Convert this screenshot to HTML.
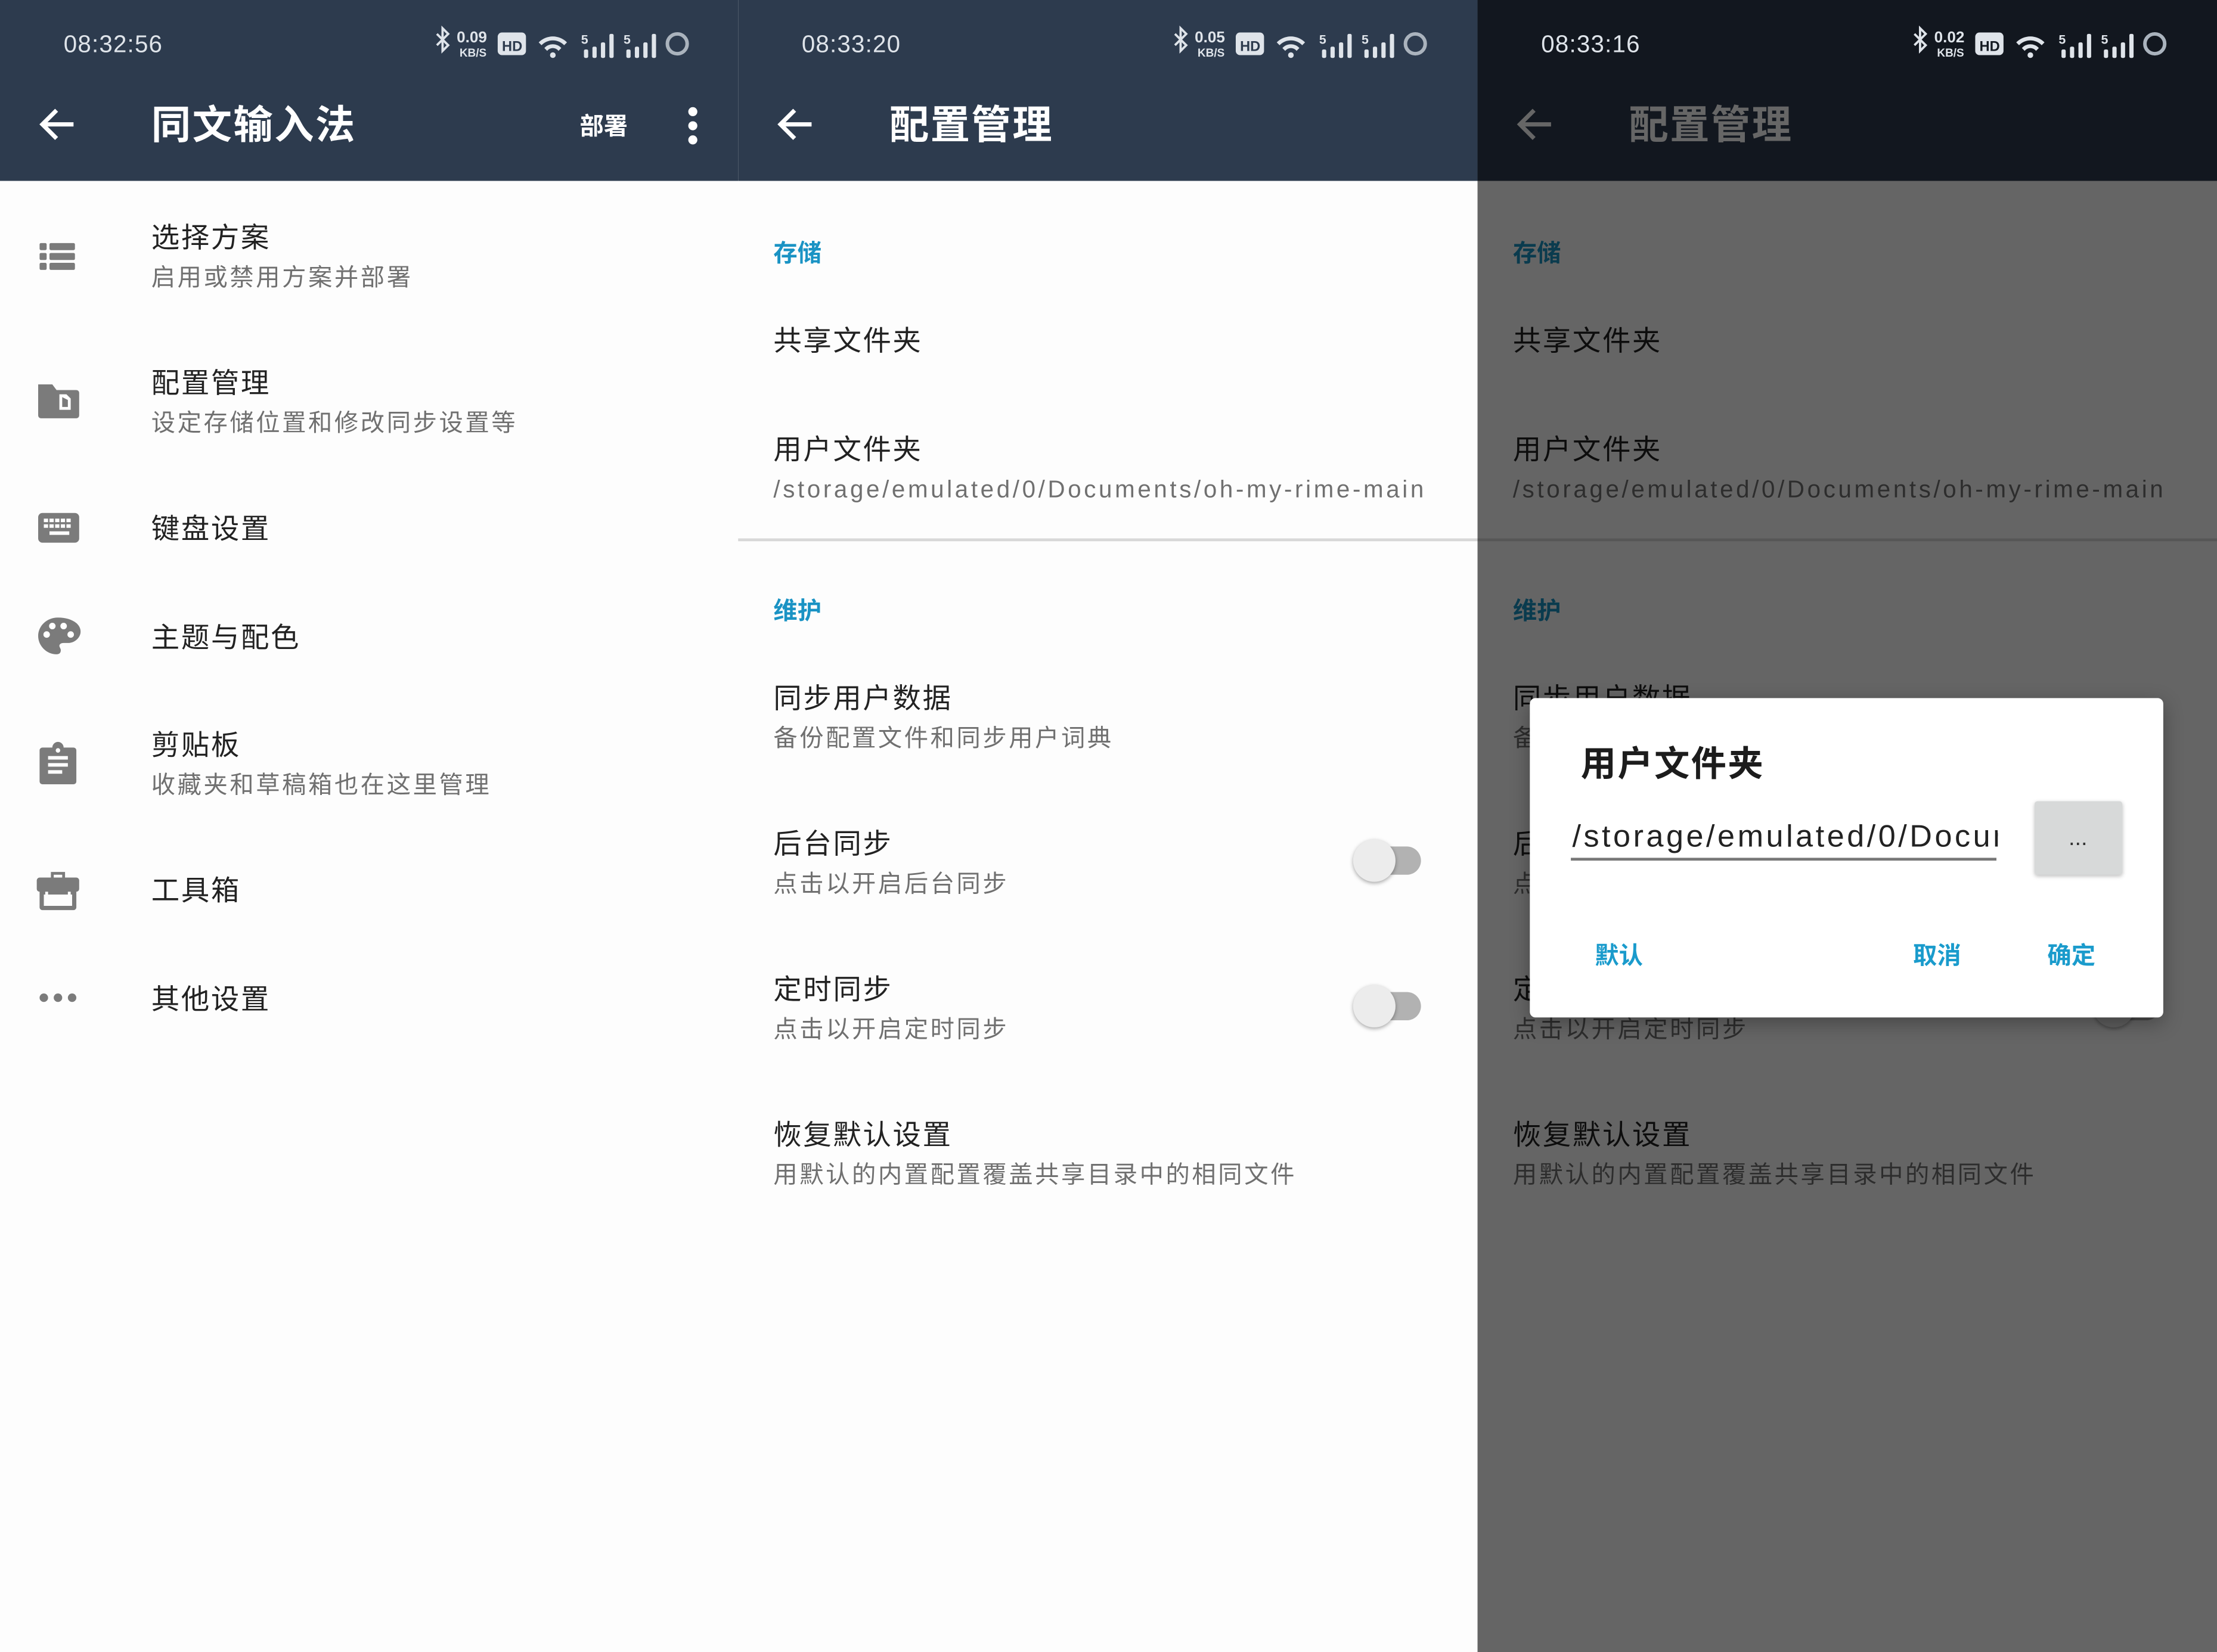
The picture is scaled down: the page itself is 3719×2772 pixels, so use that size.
<!DOCTYPE html>
<html><head><meta charset="utf-8">
<style>
html,body{margin:0;padding:0;width:3719px;height:2772px;overflow:hidden;background:#fff}
#s{position:absolute;left:0;top:0;width:1568px;height:1169px;transform:scale(2.37181,2.37126);transform-origin:0 0;font-family:"Liberation Sans","Noto Sans CJK SC",sans-serif;overflow:hidden;background:#fdfdfd}
.p{position:absolute;top:0;height:1169px;overflow:hidden;background:#fdfdfd}
.hd{position:absolute;left:0;top:0;width:100%;height:128px;background:#2d3b4e}
.t{position:absolute;white-space:nowrap;line-height:1;margin-top:2px}
.time{color:#dfe4ea;font-size:17px;letter-spacing:0.5px;top:21px}
.ttl{color:#fff;font-size:28px;font-weight:bold;top:73px;letter-spacing:1px}
.h{color:#222;font-size:20px;letter-spacing:1.1px}
.sub{color:#707070;font-size:17px;letter-spacing:1.5px}
.sec{color:#1a93c4;font-size:17px;font-weight:bold}
.path{color:#707070;font-size:17px;letter-spacing:1.95px}
.tg{position:absolute;width:48px;height:40px}
.tg .tr{position:absolute;left:12px;top:10px;width:36px;height:20px;border-radius:10px;background:#b2b2b2}
.tg .th{position:absolute;left:0;top:5px;width:30px;height:30px;border-radius:50%;background:#ececec;box-shadow:0 1px 3px rgba(0,0,0,.35)}
</style></head><body><div id="s">

<!-- Panel 1 -->
<div class="p" style="left:0;width:522px">
 <div class="hd"></div>
 <div class="t time" style="left:45px">08:32:56</div>
 <svg style="position:absolute;left:305px;top:18px" width="185" height="26" viewBox="0 0 185 26" fill="#dfe4ea">
  <path d="M4 6l8 8-4 4V2l4 4-8 8" stroke="#dfe4ea" stroke-width="1.6" fill="none"/>
  <text x="18" y="12" font-size="11" font-family="Liberation Sans" font-weight="bold" fill="#dfe4ea">0.09</text>
  <text x="20" y="22" font-size="8" font-family="Liberation Sans" font-weight="bold" fill="#dfe4ea">KB/S</text>
  <rect x="47" y="5" width="20" height="16" rx="3"/>
  <text x="50" y="18" font-size="10" font-weight="bold" fill="#2d3b4e" font-family="Liberation Sans">HD</text>
  <path d="M76 12a14 14 0 0 1 20 0l-2 2a11 11 0 0 0-16 0zM80 16a8 8 0 0 1 12 0l-2 2a5 5 0 0 0-8 0z"/><circle cx="86" cy="21" r="2"/>
  <text x="106" y="13" font-size="9" font-weight="bold" fill="#dfe4ea">5</text>
  <rect x="108" y="17" width="3" height="6" rx="1"/><rect x="114" y="15" width="3" height="8" rx="1"/><rect x="120" y="12" width="3" height="11" rx="1"/><rect x="126" y="6" width="3" height="17" rx="1"/>
  <text x="136" y="13" font-size="9" font-weight="bold" fill="#dfe4ea">5</text>
  <rect x="138" y="17" width="3" height="6" rx="1"/><rect x="144" y="15" width="3" height="8" rx="1"/><rect x="150" y="12" width="3" height="11" rx="1"/><rect x="156" y="6" width="3" height="17" rx="1"/>
  <circle cx="174" cy="13" r="7" fill="none" stroke="#aab3bd" stroke-width="2.5"/>
 </svg>
 <svg style="position:absolute;left:26px;top:75px" width="28" height="26" viewBox="0 0 28 26"><path d="M26 13H4M14 3L4 13l10 10" stroke="#fff" stroke-width="3" fill="none"/></svg>
 <div class="t ttl" style="left:107px">同文输入法</div>
 <div class="t" style="left:410px;top:79px;color:#fff;font-size:17px;font-weight:bold">部署</div>
 <svg style="position:absolute;left:484px;top:75px" width="12" height="28"><circle cx="6" cy="4" r="3.2" fill="#fff"/><circle cx="6" cy="14" r="3.2" fill="#fff"/><circle cx="6" cy="24" r="3.2" fill="#fff"/></svg>

 <svg style="position:absolute;left:0;top:128px" width="80" height="620" viewBox="0 128 80 620" fill="#7b7b7b">
  <rect x="28" y="172" width="5" height="5" rx="1"/><rect x="35" y="172" width="18" height="5" rx="1"/>
  <rect x="28" y="179" width="5" height="5" rx="1"/><rect x="35" y="179" width="18" height="5" rx="1"/>
  <rect x="28" y="186" width="5" height="5" rx="1"/><rect x="35" y="186" width="18" height="5" rx="1"/>
  <path d="M27 272h10l3 4h14a2 2 0 0 1 2 2v16a2 2 0 0 1-2 2H29a2 2 0 0 1-2-2z"/><path d="M42 279h5l3 3v8h-8z" fill="#fff"/><path d="M44 281v7h4v-5z" fill="#7b7b7b"/>
  <rect x="27" y="363" width="29" height="21" rx="3"/>
  <g fill="#fff"><rect x="31" y="367" width="3" height="2.5"/><rect x="35" y="367" width="3" height="2.5"/><rect x="39" y="367" width="3" height="2.5"/><rect x="43" y="367" width="3" height="2.5"/><rect x="47" y="367" width="3" height="2.5"/><rect x="31" y="371" width="3" height="2.5"/><rect x="35" y="371" width="3" height="2.5"/><rect x="39" y="371" width="3" height="2.5"/><rect x="43" y="371" width="3" height="2.5"/><rect x="47" y="371" width="3" height="2.5"/><rect x="35" y="376" width="14" height="2.5"/></g>
  <path d="M41 437c-8 0-14 6-14 13s6 13 13 13c2 0 3-1 3-3 0-1-1-2-1-3 0-1 1-2 3-2h3c5 0 9-4 9-8 0-6-7-10-16-10z"/>
  <g fill="#fff"><circle cx="33" cy="449" r="2.3"/><circle cx="37" cy="443" r="2.3"/><circle cx="45" cy="443" r="2.3"/><circle cx="50" cy="449" r="2.3"/></g>
  <path d="M30 529h7a4 4 0 0 1 8 0h7a2 2 0 0 1 2 2v22a2 2 0 0 1-2 2H30a2 2 0 0 1-2-2V531a2 2 0 0 1 2-2z"/><circle cx="41" cy="531" r="1.6" fill="#fff"/>
  <g fill="#fff"><rect x="34" y="535" width="14" height="2.5"/><rect x="34" y="540" width="14" height="2.5"/><rect x="34" y="545" width="10" height="2.5"/></g>
  <path d="M36 617h10v4h-2v-2h-6v2h-2z"/><rect x="26" y="621" width="30" height="10" rx="2"/><path d="M28 630h4v3h2v-3h14v3h2v-3h4v12a2 2 0 0 1-2 2H30a2 2 0 0 1-2-2zM31 633v8h20v-8z"/>
  <circle cx="31" cy="706" r="3"/><circle cx="41" cy="706" r="3"/><circle cx="51" cy="706" r="3"/>
 </svg>
 <div class="t h" style="left:107px;top:157px">选择方案</div>
 <div class="t sub" style="left:107px;top:186px">启用或禁用方案并部署</div>
 <div class="t h" style="left:107px;top:260px">配置管理</div>
 <div class="t sub" style="left:107px;top:289px">设定存储位置和修改同步设置等</div>
 <div class="t h" style="left:107px;top:363px">键盘设置</div>
 <div class="t h" style="left:107px;top:440px">主题与配色</div>
 <div class="t h" style="left:107px;top:516px">剪贴板</div>
 <div class="t sub" style="left:107px;top:545px">收藏夹和草稿箱也在这里管理</div>
 <div class="t h" style="left:107px;top:619px">工具箱</div>
 <div class="t h" style="left:107px;top:696px">其他设置</div>
</div>

<!-- Panel 2 -->
<div class="p" style="left:522px;width:523px">
 <div class="hd"></div>
 <div class="t time" style="left:45px">08:33:20</div>
 <svg style="position:absolute;left:305px;top:18px" width="185" height="26" viewBox="0 0 185 26" fill="#dfe4ea">
  <path d="M4 6l8 8-4 4V2l4 4-8 8" stroke="#dfe4ea" stroke-width="1.6" fill="none"/>
  <text x="18" y="12" font-size="11" font-weight="bold" fill="#dfe4ea">0.05</text><text x="20" y="22" font-size="8" font-weight="bold" fill="#dfe4ea">KB/S</text>
  <rect x="47" y="5" width="20" height="16" rx="3"/><text x="50" y="18" font-size="10" font-weight="bold" fill="#2d3b4e">HD</text>
  <path d="M76 12a14 14 0 0 1 20 0l-2 2a11 11 0 0 0-16 0zM80 16a8 8 0 0 1 12 0l-2 2a5 5 0 0 0-8 0z"/><circle cx="86" cy="21" r="2"/>
  <text x="106" y="13" font-size="9" font-weight="bold" fill="#dfe4ea">5</text>
  <rect x="108" y="17" width="3" height="6" rx="1"/><rect x="114" y="15" width="3" height="8" rx="1"/><rect x="120" y="12" width="3" height="11" rx="1"/><rect x="126" y="6" width="3" height="17" rx="1"/>
  <text x="136" y="13" font-size="9" font-weight="bold" fill="#dfe4ea">5</text>
  <rect x="138" y="17" width="3" height="6" rx="1"/><rect x="144" y="15" width="3" height="8" rx="1"/><rect x="150" y="12" width="3" height="11" rx="1"/><rect x="156" y="6" width="3" height="17" rx="1"/>
  <circle cx="174" cy="13" r="7" fill="none" stroke="#aab3bd" stroke-width="2.5"/>
 </svg>
 <svg style="position:absolute;left:26px;top:75px" width="28" height="26" viewBox="0 0 28 26"><path d="M26 13H4M14 3L4 13l10 10" stroke="#fff" stroke-width="3" fill="none"/></svg>
 <div class="t ttl" style="left:107px">配置管理</div>
 <div class="t sec" style="left:25px;top:169px">存储</div>
 <div class="t h" style="left:25px;top:230px">共享文件夹</div>
 <div class="t h" style="left:25px;top:307px">用户文件夹</div>
 <div class="t path" style="left:25px;top:336px">/storage/emulated/0/Documents/oh-my-rime-main</div>
 <div style="position:absolute;left:0;top:381px;width:100%;height:2px;background:#d8d8d8"></div>
 <div class="t sec" style="left:25px;top:422px">维护</div>
 <div class="t h" style="left:25px;top:483px">同步用户数据</div>
 <div class="t sub" style="left:25px;top:512px">备份配置文件和同步用户词典</div>
 <div class="t h" style="left:25px;top:586px">后台同步</div>
 <div class="t sub" style="left:25px;top:615px">点击以开启后台同步</div>
 <div class="tg" style="left:435px;top:589px"><div class="tr"></div><div class="th"></div></div>
 <div class="t h" style="left:25px;top:689px">定时同步</div>
 <div class="t sub" style="left:25px;top:718px">点击以开启定时同步</div>
 <div class="tg" style="left:435px;top:692px"><div class="tr"></div><div class="th"></div></div>
 <div class="t h" style="left:25px;top:792px">恢复默认设置</div>
 <div class="t sub" style="left:25px;top:821px">用默认的内置配置覆盖共享目录中的相同文件</div>
</div>

<!-- Panel 3 -->
<div class="p" style="left:1045px;width:523px">
 <div class="hd"></div>
 <svg style="position:absolute;left:26px;top:75px" width="28" height="26" viewBox="0 0 28 26"><path d="M26 13H4M14 3L4 13l10 10" stroke="#fff" stroke-width="3" fill="none"/></svg>
 <div class="t ttl" style="left:107px">配置管理</div>
 <div class="t sec" style="left:25px;top:169px">存储</div>
 <div class="t h" style="left:25px;top:230px">共享文件夹</div>
 <div class="t h" style="left:25px;top:307px">用户文件夹</div>
 <div class="t path" style="left:25px;top:336px">/storage/emulated/0/Documents/oh-my-rime-main</div>
 <div style="position:absolute;left:0;top:381px;width:100%;height:2px;background:#d8d8d8"></div>
 <div class="t sec" style="left:25px;top:422px">维护</div>
 <div class="t h" style="left:25px;top:483px">同步用户数据</div>
 <div class="t sub" style="left:25px;top:512px">备份配置文件和同步用户词典</div>
 <div class="t h" style="left:25px;top:586px">后台同步</div>
 <div class="t sub" style="left:25px;top:615px">点击以开启后台同步</div>
 <div class="tg" style="left:435px;top:589px"><div class="tr"></div><div class="th"></div></div>
 <div class="t h" style="left:25px;top:689px">定时同步</div>
 <div class="t sub" style="left:25px;top:718px">点击以开启定时同步</div>
 <div class="tg" style="left:435px;top:692px"><div class="tr"></div><div class="th"></div></div>
 <div class="t h" style="left:25px;top:792px">恢复默认设置</div>
 <div class="t sub" style="left:25px;top:821px">用默认的内置配置覆盖共享目录中的相同文件</div>
 <!-- overlay -->
 <div style="position:absolute;left:0;top:0;width:100%;bottom:0;background:rgba(0,0,0,0.6)"></div>
 <!-- status bar above overlay -->
 <div class="t time" style="left:45px">08:33:16</div>
 <svg style="position:absolute;left:305px;top:18px" width="185" height="26" viewBox="0 0 185 26" fill="#dfe4ea">
  <path d="M4 6l8 8-4 4V2l4 4-8 8" stroke="#dfe4ea" stroke-width="1.6" fill="none"/>
  <text x="18" y="12" font-size="11" font-weight="bold" fill="#dfe4ea">0.02</text><text x="20" y="22" font-size="8" font-weight="bold" fill="#dfe4ea">KB/S</text>
  <rect x="47" y="5" width="20" height="16" rx="3"/><text x="50" y="18" font-size="10" font-weight="bold" fill="#141a22">HD</text>
  <path d="M76 12a14 14 0 0 1 20 0l-2 2a11 11 0 0 0-16 0zM80 16a8 8 0 0 1 12 0l-2 2a5 5 0 0 0-8 0z"/><circle cx="86" cy="21" r="2"/>
  <text x="106" y="13" font-size="9" font-weight="bold" fill="#dfe4ea">5</text>
  <rect x="108" y="17" width="3" height="6" rx="1"/><rect x="114" y="15" width="3" height="8" rx="1"/><rect x="120" y="12" width="3" height="11" rx="1"/><rect x="126" y="6" width="3" height="17" rx="1"/>
  <text x="136" y="13" font-size="9" font-weight="bold" fill="#dfe4ea">5</text>
  <rect x="138" y="17" width="3" height="6" rx="1"/><rect x="144" y="15" width="3" height="8" rx="1"/><rect x="150" y="12" width="3" height="11" rx="1"/><rect x="156" y="6" width="3" height="17" rx="1"/>
  <circle cx="174" cy="13" r="7" fill="none" stroke="#aab3bd" stroke-width="2.5"/>
 </svg>
 <!-- dialog -->
 <div style="position:absolute;left:37px;top:494px;width:448px;height:226px;background:#fff;border-radius:4px;box-shadow:0 4px 14px rgba(0,0,0,.3)">
  <div class="t" style="left:36px;top:33px;font-size:25px;font-weight:bold;color:#1c1c1c;letter-spacing:1px">用户文件夹</div>
  <div style="position:absolute;left:30px;top:80px;width:301px;height:34px;overflow:hidden">
   <div class="t" style="left:0;top:5px;font-size:22px;color:#222;letter-spacing:1.9px">/storage/emulated/0/Documents/oh-my-rime-main</div>
  </div>
  <div style="position:absolute;left:29px;top:113px;width:301px;height:2px;background:#777"></div>
  <div style="position:absolute;left:357px;top:73px;width:62px;height:52px;background:#d7d9d9;border-radius:2px;box-shadow:0 1px 3px rgba(0,0,0,.25)"></div>
  <div class="t" style="left:381px;top:90px;font-size:16px;color:#333">...</div>
  <div class="t" style="left:46px;top:172px;font-size:17px;font-weight:bold;color:#1a9bcc">默认</div>
  <div class="t" style="left:271px;top:172px;font-size:17px;font-weight:bold;color:#1a9bcc">取消</div>
  <div class="t" style="left:366px;top:172px;font-size:17px;font-weight:bold;color:#1a9bcc">确定</div>
 </div>
</div>

</div></body></html>
